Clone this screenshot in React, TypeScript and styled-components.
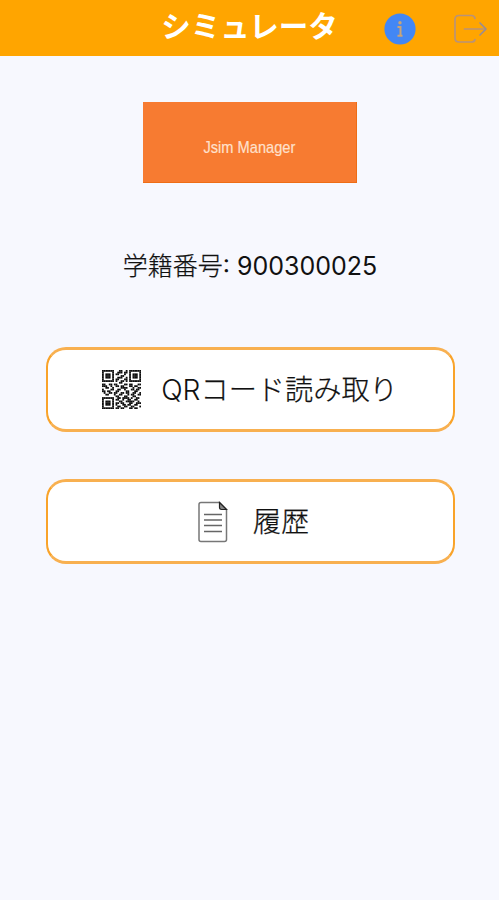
import React from "react";
import styled, { createGlobalStyle } from "styled-components";

const GlobalStyle = createGlobalStyle`
  * { box-sizing: border-box; }
  body {
    margin: 0;
    background: #f7f8fe;
    font-family: Inter, "Noto Sans CJK JP", sans-serif;
    color: #111;
  }
`;

const Screen = styled.div`
  display: flex;
  flex-direction: column;
  align-items: center;
  width: 100%;
  min-height: 900px;
  background: #f7f8fe;
`;

const Header = styled.header`
  display: grid;
  grid-template-columns: 1fr 180px 1fr;
  align-items: center;
  width: 100%;
  height: 56px;
  background: #ffa500;
`;

const Title = styled.h1`
  grid-column: 2;
  margin: 0 0 4px;
  font-size: 29.5px;
  line-height: 44px;
  font-weight: 700;
  color: #fff;
  text-align: center;
  white-space: nowrap;
`;

const Actions = styled.div`
  display: flex;
  align-items: center;
  justify-content: flex-end;
  gap: 36px;
  padding: 1px 11px 0 0;
`;

const IconButton = styled.button`
  display: flex;
  padding: 0;
  border: 0;
  background: none;
`;

const Banner = styled.div`
  display: flex;
  align-items: center;
  justify-content: center;
  width: 214px;
  height: 81px;
  margin: 46px 0 0 1px;
  padding-top: 11px;
  background: #f77b31;
  border-right: 1px solid #ee6d16;
  border-bottom: 1px solid #ee6d16;
`;

const BannerText = styled.span`
  font-family: "Liberation Sans", sans-serif;
  font-size: 17px;
  line-height: 20px;
  color: #ffe0cc;
  white-space: nowrap;
  -webkit-text-stroke: 0.2px #ffe0cc;
  transform: scaleX(0.86);
`;

const StudentNumber = styled.p`
  margin: 63px 0 0 1px;
  font-size: 25px;
  line-height: 40px;
  white-space: nowrap;
`;

const Kana = styled.span`
  font-weight: 300;
  -webkit-text-stroke: 0.25px #111;
`;

const Menu = styled.nav`
  display: flex;
  flex-direction: column;
  gap: 47px;
  margin: 61px 0 0 1px;
`;

const MenuButton = styled.button<{ $gap: number; $shift?: number }>`
  display: flex;
  align-items: center;
  justify-content: center;
  gap: ${({ $gap }) => $gap}px;
  width: 409px;
  height: 85px;
  padding: 0 0 0 ${({ $shift = 0 }) => $shift}px;
  border: solid;
  border-width: 3px 2px;
  border-color: #f8b050 #f9a32a;
  border-radius: 20px;
  background: #fff;
  color: #111;
  font-family: inherit;
`;

const Label = styled.span`
  font-size: 28.2px;
  line-height: 40px;
  font-weight: 350;
  white-space: nowrap;
`;

const QR_ROWS = [
  "11111110001100101111111",
  "10000010011101101000001",
  "10111010110001001011101",
  "10111010000110001011101",
  "10111010011100101011101",
  "10000010110001101000001",
  "11111110100110101111111",
  "00000000001100000000000",
  "11001101100001101100011",
  "11100100110110001101100",
  "00110010000111100010011",
  "10000110011001000110110",
  "11011000110000110001100",
  "01001101100110110011001",
  "00110001001100010110011",
  "00000000110001100011000",
  "11111110011011110100110",
  "10000010110010011001100",
  "10111010001100111110010",
  "10111010110110001100111",
  "10111010100011011001100",
  "10000010011001100110001",
  "11111110110110001101100",
];

const QrIcon = () => (
  <svg width="39" height="39" viewBox="0 0 23 23" fill="#0c0c0c">
    {QR_ROWS.map((row, y) =>
      [...row].map((cell, x) =>
        cell === "1" ? <rect key={`${x}-${y}`} x={x} y={y} width="1.06" height="1.06" /> : null
      )
    )}
  </svg>
);

const DocumentIcon = () => (
  <svg width="30" height="42" viewBox="0 0 30 42" fill="none">
    <path d="M3 1.5H21.5L28.5 8.5V38.5Q28.5 40.5 26.5 40.5H3Q1 40.5 1 38.5V3.5Q1 1.5 3 1.5Z" stroke="#777" strokeWidth="1.5" />
    <path d="M21.5 1.5V6.5Q21.5 8.5 23.5 8.5H28.5Z" fill="#888" stroke="#222" strokeWidth="1.2" />
    <path d="M6 13.5H24M6 19H24M6 24.5H24M6 30.5H24" stroke="#666" strokeWidth="1.6" />
  </svg>
);

const InfoIcon = () => (
  <svg width="32" height="32" viewBox="0 0 32 32">
    <circle cx="16" cy="16" r="15.6" fill="#4287f5" />
    <circle cx="16" cy="9.8" r="1.7" fill="#c9a477" />
    <path d="M13.5 14H16.5V22.7M13.5 22.7H18.5" fill="none" stroke="#c9a477" strokeWidth="2" />
  </svg>
);

const LogoutIcon = () => (
  <svg width="36" height="32" viewBox="0 0 36 32" fill="none" stroke="#b99378" strokeWidth="1.7" strokeLinecap="round" strokeLinejoin="round">
    <path d="M23 5.5Q22.5 2.5 19.5 2.5H7Q3 2.5 3 6.5V25Q3 29 7 29H19.5Q22.5 29 23 26.5" />
    <path d="M12.5 16H33" />
    <path d="M28 10L34 16L28 22" stroke="#9a8c92" />
  </svg>
);

export default function App() {
  return (
    <>
      <GlobalStyle />
      <Screen>
        <Header>
          <Title>シミュレータ</Title>
          <Actions>
            <IconButton aria-label="情報"><InfoIcon /></IconButton>
            <IconButton aria-label="ログアウト"><LogoutIcon /></IconButton>
          </Actions>
        </Header>
        <Banner><BannerText>Jsim Manager</BannerText></Banner>
        <StudentNumber><Kana>学籍番号</Kana>: 900300025</StudentNumber>
        <Menu>
          <MenuButton $gap={20}><QrIcon /><Label>QR<Kana>コード読み取り</Kana></Label></MenuButton>
          <MenuButton $gap={25} $shift={7}><DocumentIcon /><Label><Kana>履歴</Kana></Label></MenuButton>
        </Menu>
      </Screen>
    </>
  );
}
